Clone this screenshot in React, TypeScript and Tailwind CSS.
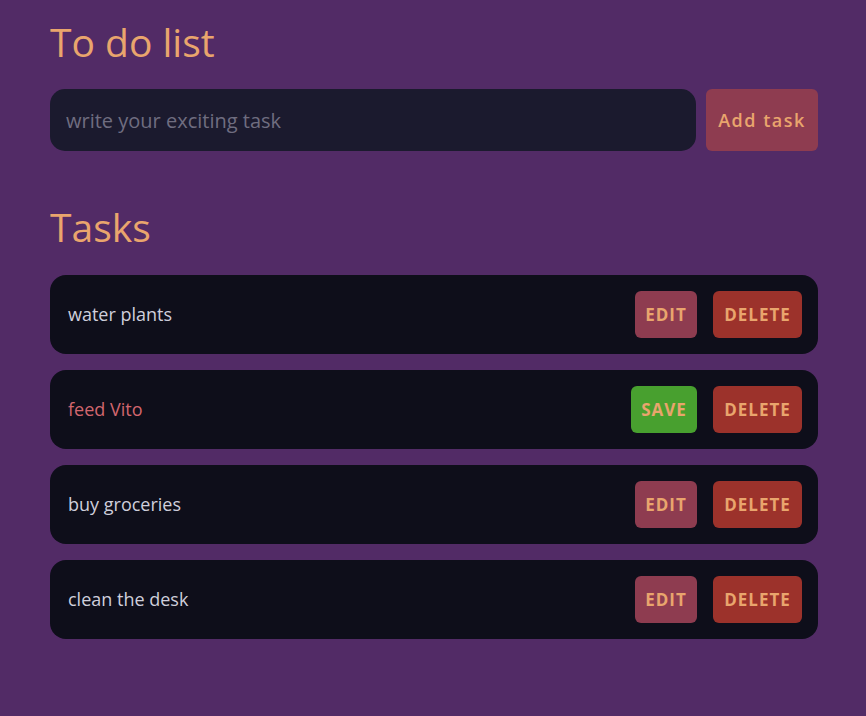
import { useState } from "react";

type Task = { id: number; name: string; editing: boolean };

const initialTasks: Task[] = [
  { id: 1, name: "water plants", editing: false },
  { id: 2, name: "feed Vito", editing: true },
  { id: 3, name: "buy groceries", editing: false },
  { id: 4, name: "clean the desk", editing: false },
];

export default function App() {
  const [tasks, setTasks] = useState(initialTasks);
  const [draft, setDraft] = useState("");

  return (
    <div
      className="min-h-[716px] bg-[#522b66] text-[#e9a56d]"
      style={{ fontFamily: '"Open Sans", "Noto Sans", sans-serif' }}
    >
      <div className="ml-[50px] w-[768px] pt-[14px]">
        <h1 className="text-[39px] leading-[56px] font-normal">To do list</h1>

        <form
          className="mt-[19px] flex gap-[10px]"
          onSubmit={(e) => {
            e.preventDefault();
            if (!draft.trim()) return;
            setTasks([...tasks, { id: Date.now(), name: draft, editing: false }]);
            setDraft("");
          }}
        >
          <input
            value={draft}
            onChange={(e) => setDraft(e.target.value)}
            placeholder="write your exciting task"
            className="h-[62px] flex-1 rounded-[15px] bg-[#1b1a2e] px-4 text-[20px] text-[#c9c9d6] placeholder:text-[#6f6d80] outline-none"
          />
          <button className="h-[62px] w-[112px] rounded-[6px] bg-[#8e3c50] text-[18px] font-semibold tracking-[1.5px]">
            Add task
          </button>
        </form>

        <h2 className="mt-[48px] text-[39px] leading-[56px] font-normal">Tasks</h2>

        <ul className="mt-[20px] flex flex-col gap-[16px]">
          {tasks.map((t) => (
            <li
              key={t.id}
              className="flex h-[79px] items-center justify-between rounded-[16px] bg-[#0e0e1a] pr-[16px] pl-[18px]"
            >
              <span className={t.editing ? "text-[18px] text-[#d2666e]" : "text-[18px] text-[#cfcfdc]"}>
                {t.name}
              </span>
              <div className="flex gap-[16px]">
                {t.editing ? (
                  <button className="h-[47px] w-[66px] rounded-[6px] bg-[#48a02f] text-[17px] font-bold tracking-[1px] uppercase">
                    Save
                  </button>
                ) : (
                  <button className="h-[47px] w-[62px] rounded-[6px] bg-[#8e3c50] text-[17px] font-bold tracking-[1px] uppercase">
                    Edit
                  </button>
                )}
                <button
                  onClick={() => setTasks(tasks.filter((x) => x.id !== t.id))}
                  className="h-[47px] w-[89px] rounded-[6px] bg-[#9c322b] text-[17px] font-bold tracking-[1px] uppercase"
                >
                  Delete
                </button>
              </div>
            </li>
          ))}
        </ul>
      </div>
    </div>
  );
}
